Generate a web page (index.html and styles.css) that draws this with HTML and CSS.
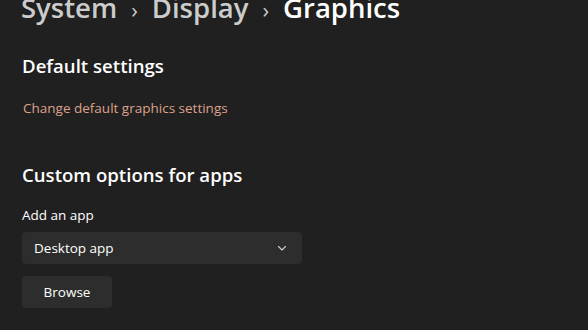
FILE: index.html
```html
<!DOCTYPE html>
<html lang="en">
<head>
  <meta charset="UTF-8">
  <title>Graphics</title>
  <link rel="stylesheet" href="styles.css">
</head>
<body>
  <div class="page">
    <h1 class="breadcrumb">
      <span class="crumb">System</span>
      <span class="sep">&#x203A;</span>
      <span class="crumb">Display</span>
      <span class="sep">&#x203A;</span>
      <span class="current">Graphics</span>
    </h1>

    <h2 class="section-title first">Default settings</h2>
    <a class="link" href="#">Change default graphics settings</a>

    <h2 class="section-title">Custom options for apps</h2>
    <label class="field-label">Add an app</label>
    <div class="select">
      <span>Desktop app</span>
      <svg class="chevron" width="12" height="12" viewBox="0 0 12 12">
        <path d="M2.5 4.5 L6 8 L9.5 4.5" fill="none" stroke="#cfcfcf" stroke-width="1.1" stroke-linecap="round" stroke-linejoin="round"/>
      </svg>
    </div>
    <button class="button" type="button">Browse</button>
  </div>
</body>
</html>
```

FILE: styles.css
```css
body {
  margin: 0;
  background-color: #202020;
  color: #ffffff;
  font-family: "Open Sans", "Noto Sans", sans-serif;
  overflow: hidden;
}

.page {
  padding-left: 22px;
}

.breadcrumb {
  display: flex;
  align-items: baseline;
  gap: 14px;
  margin: -12px 0 0 -1px;
  font-size: 27.5px;
  font-weight: 600;
  line-height: 40px;
}

.crumb {
  color: #cccccc;
}

.sep {
  color: #cccccc;
  font-size: 22px;
  font-weight: 400;
}

.current {
  color: #ffffff;
}

.section-title {
  margin: 0;
  font-size: 18.6px;
  font-weight: 600;
  line-height: 28px;
}

.section-title.first {
  margin-top: 23px;
}

.link {
  display: block;
  margin-top: 19px;
  margin-left: 1px;
  color: #dea08b;
  font-size: 13.5px;
  text-decoration: none;
}

.link + .section-title {
  margin-top: 44px;
}

.field-label {
  display: block;
  margin-top: 17px;
  font-size: 13.5px;
  color: #ffffff;
}

.select {
  display: flex;
  align-items: center;
  justify-content: space-between;
  width: 280px;
  height: 32px;
  margin-top: 8px;
  padding: 0 14px 0 12px;
  box-sizing: border-box;
  background-color: #2d2d2d;
  border-radius: 4px;
  font-size: 13.5px;
}

.button {
  display: block;
  width: 90px;
  height: 32px;
  margin-top: 12px;
  background-color: #2d2d2d;
  color: #ffffff;
  border: none;
  border-radius: 4px;
  font-family: inherit;
  font-size: 13.5px;
}
```
